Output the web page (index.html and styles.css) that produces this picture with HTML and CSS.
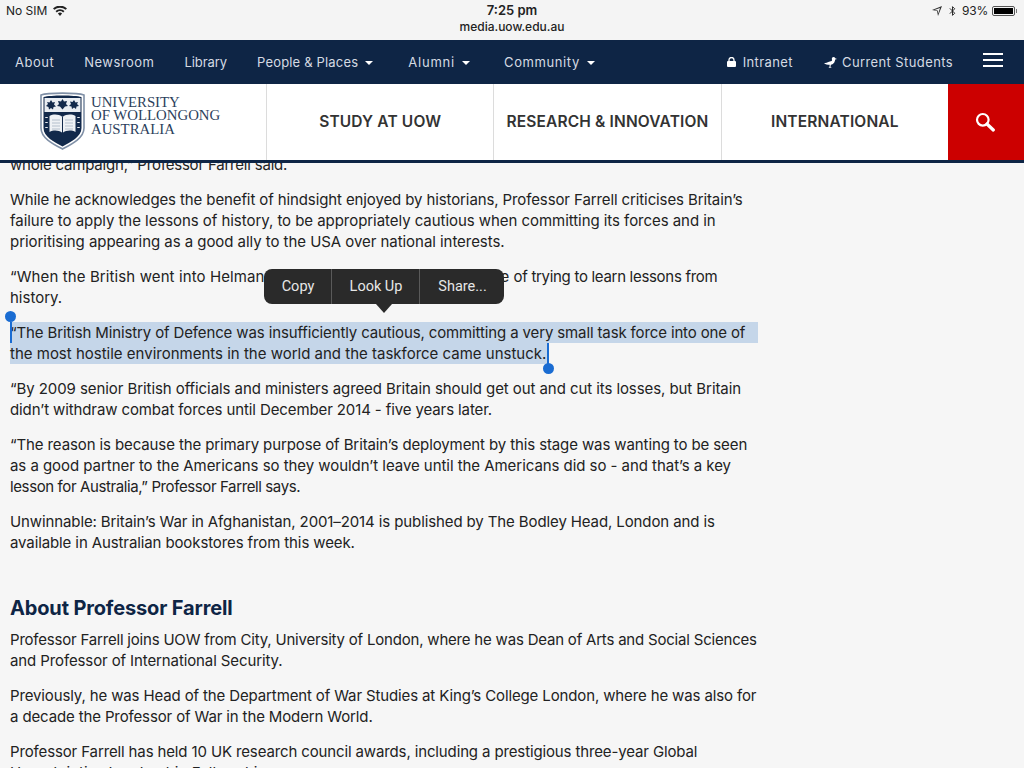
FILE: index.html
```html
<!DOCTYPE html>
<html lang="en">
<head>
    <meta charset="UTF-8">
    <meta name="viewport" content="width=device-width, initial-scale=1.0">
    <link rel="stylesheet" href="styles.css">
    <title>University of Wollongong Australia</title>
</head>
<body>
    <div class="top">
        <div class="status">
            <div class="status-left">
                <span>No SIM</span>
                <svg class="wifi" viewBox="0 0 14 10" width="14" height="10"><path d="M7 10 4.9 7.6a3 3 0 0 1 4.2 0zM3.8 6.4 2.5 5a6.6 6.6 0 0 1 9 0l-1.3 1.4a4.7 4.7 0 0 0-6.4 0zM1.4 3.8 0 2.4a10.2 10.2 0 0 1 14 0l-1.4 1.4a8.3 8.3 0 0 0-11.2 0z" fill="#222"/></svg>
            </div>
            <div class="status-mid">
                <div class="clock">7:25 pm</div>
                <div class="url">media.uow.edu.au</div>
            </div>
            <div class="status-right">
                <svg viewBox="0 0 10 10" width="10" height="10"><path d="M10 0 6 10 5 5 0 4zM8 2 2.500 4 5.800 4.400 6.200 7.500z" fill="#333" fill-rule="evenodd"/></svg>
                <svg class="bt" viewBox="0 0 8 12" width="7" height="12"><path d="M1 3l5.500 5.500L4 11V1l2.500 2.500L1 9" fill="none" stroke="#222" stroke-width="1.100"/></svg>
                <span class="percent">93%</span>
                <span class="battery"><span class="battery-fill"></span></span>
            </div>
        </div>

        <nav class="nav">
            <a>About</a>
            <a>Newsroom</a>
            <a class="nav-tight">Library</a>
            <a class="nav-drop nav-snug">People &amp; Places<i class="caret"></i></a>
            <a class="nav-drop nav-wide">Alumni<i class="caret"></i></a>
            <a class="nav-drop nav-community">Community<i class="caret"></i></a>
            <div class="nav-right">
                <a class="with-icon intranet">
                    <svg viewBox="0 0 9 10" width="9" height="10"><path d="M2 4.500V3a2.500 2.500 0 0 1 5 0v1.500" fill="none" stroke="#fff" stroke-width="1.300"/><rect y="4" width="9" height="6" rx="1" fill="#fff"/></svg>
                    <span>Intranet</span>
                </a>
                <a class="with-icon students">
                    <svg viewBox="0 0 13 11" width="13" height="11"><path d="M9.500 0a1.800 1.800 0 0 1 1.700 1.300L13 1.900l-1.800.5c-.3 2-1 4.600-4.400 5.300L6.500 10 8 10.700H4.500l1-.9.200-2C3.500 7.800 1.500 7 0 6.400c1.800-.3 3.500-1.300 5-1.700 1.300-.3 2.500-.5 3-1.200.3-.5-.2-1.100-.2-1.700A1.800 1.800 0 0 1 9.500 0z" fill="#fff"/></svg>
                    <span>Current Students</span>
                </a>
                <div class="burger"><span></span><span></span><span></span></div>
            </div>
        </nav>

        <header class="mainbar">
            <div class="logo">
                <svg class="crest" viewBox="0 0 45 58" width="45" height="58">
                    <path d="M1 3C8 .5 37 .5 44 3v33c0 10-12 16-21.500 21C13 52 1 46 1 36z" fill="#fff" stroke="#7f8fa6" stroke-width="1.600"/>
                    <path d="M3.500 5c7-2 31-2 38 0v31c0 9-11 14-19 18.500C14.500 50 3.500 45 3.500 36z" fill="#12294b"/>
                    <rect x="4.500" y="6" width="36" height="14" fill="#e9edf2"/>
                    <path d="M11 8l1.500 2.500L15 10l-1 2.500 2 2-2.500.5-.5 2.500-2-1.500-2 1.500-.5-2.500L6 14l2-2-1-2 2.500.5z" fill="#12294b"/>
                    <path d="M22.500 7l1.500 2.500L27 9l-1 3 2 2-3 .5-2.500 3-2.500-3-3-.5 2-2-1-3 3 .5z" fill="#12294b"/>
                    <path d="M34 8l1.500 2.500L38 10l-1 2 2 2-2.500.5-.5 2.500-2-1.500-2 1.500-.5-2.500-2.500-.5 2-2-1-2.500 2.500.5z" fill="#12294b"/>
                    <path d="M9.500 24c4-2 9-2 13 1 4-3 9-3 13-1v16c-4-2-9-2-13 1-4-3-9-3-13-1z" fill="#eef1f5"/>
                    <path d="M22.500 25v16" stroke="#12294b" stroke-width="1"/>
                    <path d="M12 28h8M12 31h8M12 34h8M12 37h8M25 28h8M25 31h8M25 34h8M25 37h8" stroke="#b4bfcc" stroke-width="1"/>
                    <path d="M6.500 25v1M6.500 30v1M6.500 35v1M38.500 25v1M38.500 30v1M38.500 35v1" stroke="#e9edf2" stroke-width="2.500"/>
                </svg>
                <div class="wordmark">UNIVERSITY<br>OF WOLLONGONG<br>AUSTRALIA</div>
            </div>
            <a class="main-link">STUDY AT UOW</a>
            <a class="main-link">RESEARCH &amp; INNOVATION</a>
            <a class="main-link">INTERNATIONAL</a>
            <div class="search">
                <svg viewBox="0 0 20 20" width="20" height="20"><circle cx="7.800" cy="7.800" r="5.800" fill="none" stroke="#fff" stroke-width="2.200"/><path d="M12 12l6.300 6" stroke="#fff" stroke-width="3.200" stroke-linecap="round"/></svg>
            </div>
        </header>
    </div>

    <main class="article">
        <p><span class="sq4">whole campaign,” Professor Farrell said.</span></p>
        <p><span class="sq2">While he acknowledges the benefit of hindsight enjoyed by historians, Professor Farrell criticises Britain’s</span><br>
        <span class="sq1">failure to apply the lessons of history, to be appropriately cautious when committing its forces and in</span><br>
        <span class="sq1">prioritising appearing as a good ally to the USA over national interests.</span></p>
        <p><span class="wd1">“When the British went into Helmand</span><span class="wd2"> in 2006, they made the mistake</span><span class="sq6"> of trying to learn lessons from</span><br>
        history.</p>
        <p class="selected">
            <span class="sel-line sel-first sq3">“The British Ministry of Defence was insufficiently cautious, committing a very small task force into one of</span>
            <span class="sel-line sel-last">the most hostile environments in the world and the taskforce came unstuck.</span>
        </p>
        <p><span class="sq15">“By 2009 senior British officials and ministers agreed Britain should get out and cut its losses, but Britain</span><br>
        <span class="sq2">didn’t withdraw combat forces until December 2014 - five years later.</span></p>
        <p><span class="sq2">“The reason is because the primary purpose of Britain’s deployment by this stage was wanting to be seen</span><br>
        <span class="sq1">as a good partner to the Americans so they wouldn’t leave until the Americans did so - and that’s a key</span><br>
        <span class="sq8">lesson for Australia,” Professor Farrell says.</span></p>
        <p><span class="sq2">Unwinnable: Britain’s War in Afghanistan, 2001–2014 is published by The Bodley Head, London and is</span><br>
        <span class="sq2">available in Australian bookstores from this week.</span></p>
        <h2>About Professor Farrell</h2>
        <p><span class="sq4">Professor Farrell joins UOW from City, University of London, where he was Dean of Arts and Social Sciences</span><br>
        <span class="sq2">and Professor of International Security.</span></p>
        <p><span class="sq3">Previously, he was Head of the Department of War Studies at King’s College London, where he was also for</span><br>
        <span class="sq3">a decade the Professor of War in the Modern World.</span></p>
        <p><span class="sq3">Professor Farrell has held 10 UK research council awards, including a prestigious three-year Global</span><br>
        Uncertainties Leadership Fellowship.</p>
    </main>

    <div class="popup">
        <span>Copy</span>
        <span>Look Up</span>
        <span>Share...</span>
    </div>
</body>
</html>
```

FILE: styles.css
```css
html, body {
    margin: 0;
    height: 768px;
    overflow: hidden;
}

body {
    font-family: 'Inter', 'Liberation Sans', sans-serif;
    background-color: #f6f6f6;
    color: #222;
    position: relative;
}

.top {
    position: absolute;
    top: 0;
    left: 0;
    width: 100%;
    z-index: 2;
}

.status {
    height: 40px;
    box-sizing: border-box;
    background-color: #f4f4f4;
    display: flex;
    justify-content: space-between;
    padding: 3px 7px 0 6px;
    font-size: 12px;
    color: #222;
    position: relative;
}

.status-left,
.status-right {
    display: flex;
    align-items: center;
    gap: 6px;
    height: 15px;
}

.status-right {
    gap: 4px;
}

.bt {
    margin: 0 2px 0 3px;
}

.percent {
    letter-spacing: -0.2px;
}

.status-mid {
    position: absolute;
    left: 0;
    right: 0;
    top: 3px;
    text-align: center;
}

.clock {
    font-size: 13px;
    font-weight: 600;
    line-height: 15px;
}

.url {
    font-size: 12px;
    font-weight: 500;
    line-height: 18px;
}

.battery {
    width: 23px;
    height: 10px;
    box-sizing: border-box;
    border: 1px solid #555;
    border-radius: 2px;
    padding: 1px;
    display: flex;
    position: relative;
    margin-right: 2px;
}

.battery::after {
    content: "";
    position: absolute;
    right: -3px;
    top: 2px;
    width: 1px;
    height: 4px;
    background-color: #777;
}

.battery-fill {
    flex: 1;
    background-color: #000;
}

.nav {
    height: 44px;
    background-color: #0e2545;
    display: flex;
    align-items: center;
    padding-left: 15px;
    gap: 30px;
    font-size: 13px;
    letter-spacing: 0.5px;
    color: #d5dbe3;
}

.nav-tight {
    letter-spacing: -0.07px;
}

.nav-drop {
    margin-right: 4px;
}

.nav-snug {
    letter-spacing: 0.17px;
    margin-right: 5px;
}

.nav-wide {
    letter-spacing: 0.8px;
}

.nav-community {
    letter-spacing: 0.6px;
}

.caret {
    display: inline-block;
    margin-left: 7px;
    vertical-align: 2px;
    border-top: 4px solid #fff;
    border-left: 4px solid transparent;
    border-right: 4px solid transparent;
}

.nav-right {
    margin-left: auto;
    display: flex;
    align-items: center;
    padding-right: 21px;
    letter-spacing: 0.4px;
}

.with-icon {
    display: flex;
    align-items: center;
    gap: 5px;
}

.intranet {
    gap: 7px;
}

.students {
    margin-left: 31px;
}

.burger {
    margin-left: 30px;
    width: 20px;
    display: flex;
    flex-direction: column;
    gap: 4px;
    margin-top: -4px;
}

.burger span {
    height: 2px;
    background-color: #fff;
}

.mainbar {
    height: 76px;
    background-color: #fff;
    border-bottom: 3px solid #0e2545;
    display: flex;
}

.logo {
    width: 266px;
    display: flex;
    align-items: center;
    padding-left: 40px;
    box-sizing: border-box;
    gap: 6px;
}

.crest {
    margin-top: -2px;
}

.wordmark {
    font-family: 'Liberation Serif', serif;
    font-size: 14.800px;
    line-height: 13.500px;
    color: #2c3f5c;
    margin-top: -12px;
}

.main-link {
    flex: 1;
    border-left: 1px solid #dcdcdc;
    box-sizing: border-box;
    display: flex;
    align-items: center;
    justify-content: center;
    font-size: 15.500px;
    font-weight: 600;
    letter-spacing: 0.15px;
    color: #333;
    padding-bottom: 2px;
}

.search {
    width: 76px;
    background-color: #cc0000;
    display: flex;
    align-items: center;
    justify-content: center;
    box-sizing: border-box;
    padding-right: 2px;
}

.article {
    padding: 154px 0 0 10px;
    font-size: 15px;
    line-height: 21px;
}

.article p {
    margin: 0 0 14px;
    white-space: nowrap;
}

/* squeeze a line so it ends where the original's wider type ends */
.wd1 { letter-spacing: 0.11px; }
.wd2 { letter-spacing: 0.3px; }
.sq1 { letter-spacing: -0.05px; }
.sq15 { letter-spacing: -0.075px; }
.sq2 { letter-spacing: -0.11px; }
.sq3 { letter-spacing: -0.13px; }
.sq4 { letter-spacing: -0.2px; }
.sq6 { letter-spacing: -0.3px; }
.sq8 { letter-spacing: -0.39px; }

.article h2 {
    margin: 40px 0 6px;
    font-size: 20px;
    line-height: 30px;
    font-weight: 700;
    letter-spacing: -0.15px;
    color: #0e2545;
}

.article .selected {
    position: relative;
    width: 748px;
}

.sel-line {
    display: block;
    background-color: #c5d6e9;
}

.sel-last {
    width: 538px;
}

/* selection handles */
.sel-first::before,
.sel-last::after {
    content: "";
    position: absolute;
    width: 2px;
    height: 21px;
    background-color: #1a6cd2;
}

.sel-first::before {
    left: 0;
    top: 0;
}

.sel-last::after {
    left: 537px;
    top: 21px;
}

.selected::before,
.selected::after {
    content: "";
    position: absolute;
    width: 11px;
    height: 11px;
    border-radius: 50%;
    background-color: #1a6cd2;
}

.selected::before {
    left: -5px;
    top: -11px;
}

.selected::after {
    left: 533px;
    top: 41px;
}

.popup {
    position: absolute;
    left: 264px;
    top: 269px;
    width: 240px;
    height: 35px;
    border-radius: 8px;
    background-color: #2a2a2a;
    color: #e6e6e6;
    font-family: 'Roboto', sans-serif;
    font-size: 14.500px;
    display: flex;
    z-index: 3;
}

.popup::after {
    content: "";
    position: absolute;
    left: 112px;
    top: 35px;
    border-top: 9px solid #2a2a2a;
    border-left: 8px solid transparent;
    border-right: 8px solid transparent;
}

.popup span {
    display: flex;
    align-items: center;
    justify-content: center;
    box-sizing: border-box;
    width: 67px;
    padding-left: 1px;
}

.popup span + span {
    width: 88px;
    border-left: 1px solid #5a5a5a;
}

.popup span:last-child {
    width: 85px;
}
```
